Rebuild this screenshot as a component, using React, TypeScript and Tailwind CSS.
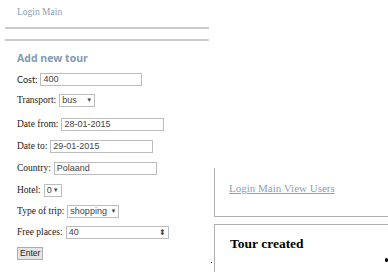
export default function App() {
  const serif = "font-['Liberation_Serif',serif]";
  const sans = "font-['Liberation_Sans',Arial,sans-serif]";
  const row = `flex items-center gap-[3px] text-[9.5px] leading-[13px] h-[13px] ${serif}`;
  const input =
    "h-[13px] border border-[#bdbdbd] bg-white px-[2px] text-[9px] leading-[11px] text-[#444] " + sans;

  return (
    <div className="w-[388px] h-[272px] bg-white overflow-hidden flex text-[#222]">
      {/* Left screenshot: add tour form */}
      <div className="w-[212px] shrink-0 flex flex-col">
        <div className={`pl-[17px] pt-[5px] h-[27px] text-[9.5px] text-[#8ea0bd] ${serif}`}>
          <span>Login</span> <span>Main</span>
        </div>
        <div className="ml-[5px] w-[204px] h-[2px] bg-[#cacaca]" />
        <div className="h-[10px]" />
        <div className="ml-[5px] w-[204px] h-[2px] bg-[#cacaca]" />
        <div className="pl-[17px] pt-[10px] flex flex-col">
          <h2 className="text-[10.5px] leading-[14px] font-bold text-[#7f9bb6] font-['Open_Sans',sans-serif]">
            Add new tour
          </h2>
          <div className={`mt-[8px] ${row}`}>
            <span className="font-['Lato',sans-serif] text-[9px]">Cost:</span>
            <div className={`${input} w-[102px]`}>400</div>
          </div>
          <div className={`mt-[8px] ${row}`}>
            <span>Transport:</span>
            <div className={`${input} w-[36px] flex items-center justify-between`}>
              <span>bus</span>
              <span className="text-[6px]">▼</span>
            </div>
          </div>
          <div className={`mt-[11px] ${row}`}>
            <span>Date from:</span>
            <div className={`${input} w-[103px]`}>28-01-2015</div>
          </div>
          <div className={`mt-[9px] ${row}`}>
            <span>Date to:</span>
            <div className={`${input} w-[103px]`}>29-01-2015</div>
          </div>
          <div className={`mt-[9px] ${row}`}>
            <span>Country:</span>
            <div className={`${input} w-[103px]`}>Polaand</div>
          </div>
          <div className={`mt-[9px] ${row}`}>
            <span>Hotel:</span>
            <div className={`${input} w-[18px] flex items-center justify-between`}>
              <span>0</span>
              <span className="text-[6px]">▼</span>
            </div>
          </div>
          <div className={`mt-[8px] ${row}`}>
            <span>Type of trip:</span>
            <div className={`${input} w-[52px] flex items-center justify-between`}>
              <span>shopping</span>
              <span className="text-[6px]">▼</span>
            </div>
          </div>
          <div className={`mt-[8px] ${row}`}>
            <span>Free places:</span>
            <div className={`${input} w-[103px] border-[#7fa6d6] flex items-center justify-between`}>
              <span>40</span>
              <span className="text-[8px]">⬍</span>
            </div>
          </div>
          <div className="mt-[8px] flex">
            <div
              className={`h-[13px] px-[2px] border border-[#adadad] bg-[#e4e4e4] text-[8.5px] leading-[11px] ${sans}`}
            >
              Enter
            </div>
          </div>
        </div>
      </div>

      {/* Right screenshot: result page */}
      <div className="flex-1 flex flex-col pt-[168px] pl-[2px]">
        <div className="h-[49px] border-l border-b border-[#b0b0b0] pl-[14px] pt-[6px]">
          <span className={`text-[11px] text-[#8ea0bd] underline ${serif}`}>
            Login Main View Users
          </span>
        </div>
        <div className="mt-[7px] flex-1 border-l border-t border-[#b0b0b0] pl-[15px] pt-[9px] relative">
          <h1 className={`text-[13.5px] font-bold text-black ${serif}`}>Tour created</h1>
          <span className="absolute right-0 top-[33px] w-[3px] h-[4px] rounded-full bg-black" />
          <span className="absolute -left-[4px] top-[37px] w-[1px] h-[1px] bg-black" />
        </div>
      </div>
    </div>
  );
}
